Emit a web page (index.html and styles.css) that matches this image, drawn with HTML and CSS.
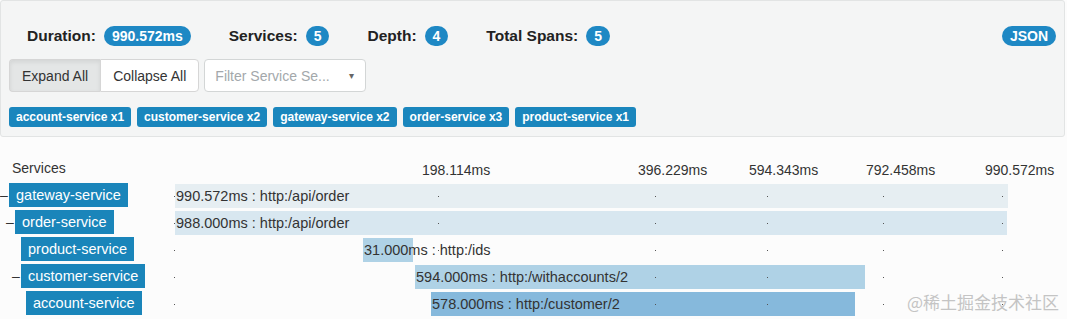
FILE: index.html
```html
<!DOCTYPE html>
<html lang="en">
<head>
  <meta charset="UTF-8" />
  <meta name="viewport" content="width=device-width, initial-scale=1.0" />
  <title>Trace</title>
  <link rel="stylesheet" href="styles.css">
</head>
<body>
  <div class="panel">
    <div class="stats">
      <span class="stat"><b>Duration:</b><span class="badge">990.572ms</span></span>
      <span class="stat"><b>Services:</b><span class="badge">5</span></span>
      <span class="stat"><b>Depth:</b><span class="badge">4</span></span>
      <span class="stat"><b>Total Spans:</b><span class="badge">5</span></span>
      <span class="badge json">JSON</span>
    </div>
    <div class="controls">
      <div class="btn-group">
        <button class="btn active">Expand All</button>
        <button class="btn">Collapse All</button>
      </div>
      <div class="select">
        <span class="placeholder">Filter Service Se...</span>
        <span class="caret">&#9662;</span>
      </div>
    </div>
    <div class="labels">
      <span class="label">account-service x1</span>
      <span class="label">customer-service x2</span>
      <span class="label">gateway-service x2</span>
      <span class="label">order-service x3</span>
      <span class="label">product-service x1</span>
    </div>
  </div>

  <div class="trace">
    <div class="head">
      <div class="name-col">Services</div>
      <div class="track">
        <span class="tick-label" style="left:247px">198.114ms</span>
        <span class="tick-label" style="left:463px">396.229ms</span>
        <span class="tick-label" style="left:574px">594.343ms</span>
        <span class="tick-label" style="left:691px">792.458ms</span>
        <span class="tick-label" style="left:810px">990.572ms</span>
      </div>
    </div>

    <div class="row">
      <div class="name-col lvl-0"><span class="toggle">&ndash;</span><span class="svc">gateway-service</span></div>
      <div class="track" data-dots>
        <div class="bar bar-1" style="left:0;width:832px">990.572ms : http:/api/order</div>
      </div>
    </div>
    <div class="row">
      <div class="name-col lvl-1"><span class="toggle">&ndash;</span><span class="svc">order-service</span></div>
      <div class="track" data-dots>
        <div class="bar bar-2" style="left:0;width:831px">988.000ms : http:/api/order</div>
      </div>
    </div>
    <div class="row">
      <div class="name-col lvl-2"><span class="toggle"></span><span class="svc">product-service</span></div>
      <div class="track" data-dots>
        <div class="bar bar-3" style="left:188px;width:49px">31.000ms : http:/ids</div>
      </div>
    </div>
    <div class="row">
      <div class="name-col lvl-2"><span class="toggle">&ndash;</span><span class="svc">customer-service</span></div>
      <div class="track" data-dots>
        <div class="bar bar-3" style="left:240px;width:449px">594.000ms : http:/withaccounts/2</div>
      </div>
    </div>
    <div class="row">
      <div class="name-col lvl-3"><span class="toggle"></span><span class="svc">account-service</span></div>
      <div class="track" data-dots>
        <div class="bar bar-4" style="left:256px;width:423px">578.000ms : http:/customer/2</div>
      </div>
    </div>
  </div>

  <div class="watermark">@稀土掘金技术社区</div>

  <script>
    // tick marks along each span row
    const ticks = [-1, 263, 480, 592, 708, 827];
    document.querySelectorAll("[data-dots]").forEach(track => {
      ticks.forEach(x => {
        const dot = document.createElement("span");
        dot.className = "dot";
        dot.style.left = x + "px";
        track.appendChild(dot);
      });
    });
  </script>
</body>
</html>
```

FILE: styles.css
```css
body {
  margin: 0;
  background: #fcfcfc;
  color: #333;
  font-family: "Liberation Sans", Arial, sans-serif;
  font-size: 14px;
  overflow: hidden;
  position: relative;
  height: 100vh;
}
.panel {
  margin-right: 2px;
  padding: 9px 8px 9px 8px;
  background: #f4f5f5;
  border: 1px solid #e2e4e4;
  border-radius: 3px;
}
.stats {
  display: flex;
  align-items: center;
  gap: 38px;
  height: 20px;
  margin-top: 16px;
  padding-left: 18px;
}
.stat {
  display: flex;
  align-items: center;
  gap: 8px;
}
.stat b {
  font-size: 15.5px;
  color: #222;
}
.badge {
  display: inline-block;
  height: 20px;
  line-height: 20px;
  padding: 0 8px;
  border-radius: 10px;
  background: #1e88c4;
  color: #fff;
  font-weight: bold;
  font-size: 14px;
}
.badge.json {
  margin-left: auto;
}
.controls {
  display: flex;
  margin-top: 13px;
  gap: 5px;
}
.btn-group {
  display: flex;
}
.btn {
  height: 33px;
  padding: 0 12px;
  font-family: inherit;
  font-size: 14px;
  color: #333;
  background: #fff;
  border: 1px solid #d6d6d6;
  border-radius: 0 4px 4px 0;
}
.btn.active {
  background: #e4e6e6;
  border-radius: 4px 0 0 4px;
  border-right: none;
  box-shadow: inset 0 2px 4px rgba(0, 0, 0, 0.08);
}
.select {
  width: 162px;
  height: 33px;
  box-sizing: border-box;
  display: flex;
  align-items: center;
  justify-content: space-between;
  padding: 0 11px 0 10px;
  background: #fff;
  border: 1px solid #d3d6d6;
  border-radius: 4px;
}
.placeholder {
  color: #a3a8ab;
}
.caret {
  font-size: 10px;
  color: #666;
}
.labels {
  display: flex;
  gap: 6px;
  margin-top: 15px;
}
.label {
  height: 20px;
  line-height: 20px;
  padding: 0 7px;
  border-radius: 3px;
  background: #1a86bd;
  color: #fff;
  font-weight: bold;
  font-size: 12px;
}
.trace {
  padding-top: 23px;
}
.head {
  display: flex;
  height: 23px;
  line-height: 16px;
}
.head .name-col {
  padding-left: 12px;
}
.tick-label {
  position: absolute;
  top: 2px;
  white-space: nowrap;
}
.row {
  display: flex;
  height: 27px;
}
.name-col {
  width: 175px;
  box-sizing: border-box;
  flex: none;
  display: flex;
  align-items: flex-start;
}
.lvl-1 { padding-left: 6px; }
.lvl-2 { padding-left: 12px; }
.lvl-3 { padding-left: 17px; }
.toggle {
  width: 9px;
  line-height: 24px;
  color: #333;
}
.svc {
  height: 24px;
  line-height: 24px;
  padding: 0 7px;
  background: #1a85ba;
  color: #fff;
  font-size: 14.5px;
  white-space: nowrap;
}
.track {
  flex: 1;
  position: relative;
}
.bar {
  position: absolute;
  top: 1px;
  height: 24px;
  line-height: 24px;
  padding-left: 1px;
  white-space: nowrap;
  font-size: 14.5px;
  color: #333;
}
.bar-1 { background: #e6eef2; }
.bar-2 { background: #d8e7f0; }
.bar-3 { background: #afd2e6; }
.bar-4 { background: #86b9dc; }
.dot {
  position: absolute;
  top: 13px;
  width: 1px;
  height: 1px;
  background: #555;
}
.watermark {
  position: absolute;
  right: 8px;
  bottom: 5px;
  font-size: 17px;
  color: #c4c4c4;
  font-family: "Noto Sans CJK SC", sans-serif;
}
```
